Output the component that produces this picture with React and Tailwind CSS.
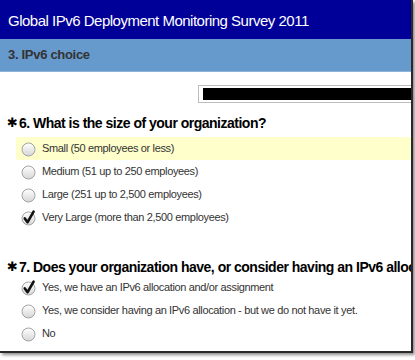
const SIZE_OPTIONS = [
  { label: "Small (50 employees or less)", hover: true },
  { label: "Medium (51 up to 250 employees)" },
  { label: "Large (251 up to 2,500 employees)" },
  { label: "Very Large (more than 2,500 employees)", checked: true },
];

const ALLOC_OPTIONS = [
  { label: "Yes, we have an IPv6 allocation and/or assignment", checked: true },
  { label: "Yes, we consider having an IPv6 allocation - but we do not have it yet." },
  { label: "No" },
];

function Radio({ checked }) {
  return (
    <svg width="16" height="16" viewBox="0 0 16 16" className="shrink-0 overflow-visible">
      <defs>
        <linearGradient id="radioFill" x1="0" y1="0" x2="0" y2="1">
          <stop offset="0" stopColor="#ffffff" />
          <stop offset="1" stopColor="#d6d6d6" />
        </linearGradient>
      </defs>
      <circle cx="7.5" cy="8.5" r="6.5" fill="url(#radioFill)" stroke="#a3a3a3" strokeWidth="1" />
      {checked && (
        <path
          d="M3.8 8.4 L6.6 12.2 L12.6 1.6"
          fill="none"
          stroke="#111"
          strokeWidth="2.6"
          strokeLinecap="round"
          strokeLinejoin="round"
        />
      )}
    </svg>
  );
}

function Option({ label, checked, hover }) {
  return (
    <div
      className={`flex items-center gap-[5px] pl-[5px] ml-[16px] h-[23px] ${hover ? "bg-[#ffffcc]" : ""}`}
    >
      <Radio checked={checked} />
      <span className="text-[11px] tracking-[-0.35px] text-[#333] whitespace-nowrap">{label}</span>
    </div>
  );
}

function Question({ num, text }) {
  return (
    <div className="flex items-center pl-[7px] h-[18px] whitespace-nowrap">
      <span className="font-['DejaVu_Sans',sans-serif] text-[13px] font-bold text-black mr-[1px]">✱</span>
      <span className="text-[14px] font-bold tracking-[-0.5px] text-black">
        {num}. {text}
      </span>
    </div>
  );
}

export default function App() {
  return (
    <div className="w-[415px] h-[360px] bg-white font-['Liberation_Sans',Arial,sans-serif]">
      <div className="w-[413px] h-[353px] overflow-hidden bg-white border-r-2 border-b-2 border-[#2a2a2a] shadow-[2px_2px_3px_rgba(0,0,0,0.45)]">
        <div className="h-[39px] bg-[#000099] flex items-center pl-[8px] pt-[3px]">
          <h1 className="text-[15px] tracking-[-0.5px] text-white whitespace-nowrap">
            Global IPv6 Deployment Monitoring Survey 2011
          </h1>
        </div>
        <div className="h-[33px] bg-[#6699cc] border-b border-[#8db3da] flex items-center pl-[8px]">
          <h2 className="text-[13px] font-bold tracking-[-0.3px] text-[#333] whitespace-nowrap">
            3. IPv6 choice
          </h2>
        </div>

        <div className="mt-[13px] ml-[198px] w-[240px] h-[18px] border border-[#bdbdbd] py-[2px] pl-[4px]">
          <div className="h-full bg-black" />
        </div>

        <div className="mt-[11px]">
          <Question num={6} text="What is the size of your organization?" />
        </div>
        <div className="mt-[5px] flex flex-col">
          {SIZE_OPTIONS.map((o) => (
            <Option key={o.label} {...o} />
          ))}
        </div>

        <div className="mt-[29px]">
          <Question num={7} text="Does your organization have, or consider having an IPv6 allocation or assignment?" />
        </div>
        <div className="flex flex-col">
          {ALLOC_OPTIONS.map((o) => (
            <Option key={o.label} {...o} />
          ))}
        </div>
      </div>
    </div>
  );
}
